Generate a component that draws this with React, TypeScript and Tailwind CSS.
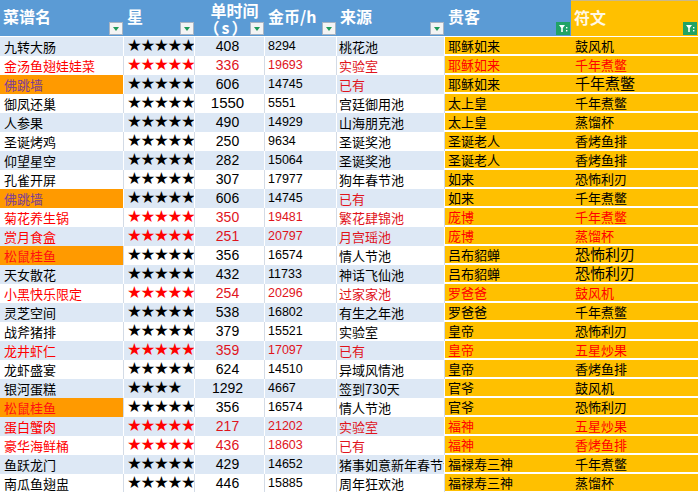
import React from 'react';

type Row = {
  n: string;
  s: number;
  t: string;
  c: string;
  src: string;
  g: string;
  r: string;
  red?: boolean;
  hl?: 'purple' | 'red';
  bigR?: boolean;
  bigT?: boolean;
};

const rows: Row[] = [
  { n: '九转大肠', s: 5, t: '408', c: '8294', src: '桃花池', g: '耶稣如来', r: '鼓风机' },
  { n: '金汤鱼翅娃娃菜', s: 5, t: '336', c: '19693', src: '实验室', g: '耶稣如来', r: '千年煮鳖', red: true },
  { n: '佛跳墙', s: 5, t: '606', c: '14745', src: '已有', g: '耶稣如来', r: '千年煮鳖', hl: 'purple', bigR: true },
  { n: '御凤还巢', s: 5, t: '1550', c: '5551', src: '宫廷御用池', g: '太上皇', r: '千年煮鳖', bigT: true },
  { n: '人参果', s: 5, t: '490', c: '14929', src: '山海朋克池', g: '太上皇', r: '蒸馏杯' },
  { n: '圣诞烤鸡', s: 5, t: '250', c: '9634', src: '圣诞奖池', g: '圣诞老人', r: '香烤鱼排' },
  { n: '仰望星空', s: 5, t: '282', c: '15064', src: '圣诞奖池', g: '圣诞老人', r: '香烤鱼排' },
  { n: '孔雀开屏', s: 5, t: '307', c: '17977', src: '狗年春节池', g: '如来', r: '恐怖利刃' },
  { n: '佛跳墙', s: 5, t: '606', c: '14745', src: '已有', g: '如来', r: '千年煮鳖', hl: 'purple' },
  { n: '菊花养生锅', s: 5, t: '350', c: '19481', src: '繁花肆锦池', g: '庞博', r: '千年煮鳖', red: true },
  { n: '赏月食盒', s: 5, t: '251', c: '20797', src: '月宫瑶池', g: '庞博', r: '蒸馏杯', red: true },
  { n: '松鼠桂鱼', s: 5, t: '356', c: '16574', src: '情人节池', g: '吕布貂蝉', r: '恐怖利刃', hl: 'red', bigR: true },
  { n: '天女散花', s: 5, t: '432', c: '11733', src: '神话飞仙池', g: '吕布貂蝉', r: '恐怖利刃', bigR: true },
  { n: '小黑快乐限定', s: 5, t: '254', c: '20296', src: '过家家池', g: '罗爸爸', r: '鼓风机', red: true },
  { n: '灵芝空间', s: 5, t: '538', c: '16802', src: '有生之年池', g: '罗爸爸', r: '千年煮鳖' },
  { n: '战斧猪排', s: 5, t: '379', c: '15521', src: '实验室', g: '皇帝', r: '恐怖利刃' },
  { n: '龙井虾仁', s: 5, t: '359', c: '17097', src: '已有', g: '皇帝', r: '五星炒果', red: true },
  { n: '龙虾盛宴', s: 5, t: '624', c: '14510', src: '异域风情池', g: '皇帝', r: '香烤鱼排' },
  { n: '银河蛋糕', s: 4, t: '1292', c: '4667', src: '签到730天', g: '官爷', r: '鼓风机' },
  { n: '松鼠桂鱼', s: 5, t: '356', c: '16574', src: '情人节池', g: '官爷', r: '恐怖利刃', hl: 'red' },
  { n: '蛋白蟹肉', s: 5, t: '217', c: '21202', src: '实验室', g: '福神', r: '五星炒果', red: true },
  { n: '豪华海鲜桶', s: 5, t: '436', c: '18603', src: '已有', g: '福神', r: '香烤鱼排', red: true },
  { n: '鱼跃龙门', s: 5, t: '429', c: '14652', src: '猪事如意新年春节池', g: '福禄寿三神', r: '千年煮鳖' },
  { n: '南瓜鱼翅盅', s: 5, t: '446', c: '15885', src: '周年狂欢池', g: '福禄寿三神', r: '蒸馏杯' },
];

const cjk = "font-['Noto_Sans_CJK_SC',sans-serif]";
const num = "font-['Liberation_Sans','Noto_Sans_CJK_SC',sans-serif]";

function Dropdown() {
  return (
    <div className="shrink-0 self-end mb-[1px] mr-[1px] w-[14px] h-[13px] bg-[#f4f4f4] border border-[#a9b4c2] flex items-center justify-center">
      <div className="w-0 h-0 border-l-[3px] border-r-[3px] border-t-[4px] border-l-transparent border-r-transparent border-t-[#1f9a5a]" />
    </div>
  );
}

function FilterOn() {
  return (
    <div className="shrink-0 self-end mb-[1px] mr-[1px] w-[14px] h-[13px] bg-[#21a366] flex items-center justify-center">
      <svg width="10" height="9" viewBox="0 0 10 9">
        <path d="M1 1h6L4.8 4v4H3.2V4z" fill="#fff" />
        <rect x="8" y="3" width="1.4" height="1.4" fill="#fff" />
        <rect x="8" y="6" width="1.4" height="1.4" fill="#fff" />
      </svg>
    </div>
  );
}

function HeadCell({ label, filtered, gold }: { label: string; filtered?: boolean; gold?: boolean }) {
  return (
    <div
      className={`h-[37px] flex border-b border-white font-bold text-[16px] whitespace-nowrap ${cjk} ${
        gold ? 'bg-[#ffc000] border-t border-t-[#c9b88a] text-[#fff8e6]' : 'bg-[#5b9bd5] text-white'
      }`}
    >
      <div className="flex-1 min-w-0 pl-[3px] flex items-center pb-[4px]">{label}</div>
      {filtered ? <FilterOn /> : <Dropdown />}
    </div>
  );
}

function TimeHead() {
  return (
    <div className={`h-[37px] flex flex-col border-b border-white bg-[#5b9bd5] text-white font-bold text-[16px] leading-none whitespace-nowrap ${cjk}`}>
      <div className="h-[19px] flex items-center justify-center pl-[9px] pt-[1px]">单时间</div>
      <div className="flex-1 flex">
        <div className="flex-1 flex items-center justify-center pl-[8px] pb-[1px] tracking-[2px]">（s）</div>
        <Dropdown />
      </div>
    </div>
  );
}

function Header() {
  return (
    <>
      <HeadCell label="菜谱名" />
      <HeadCell label="星" />
      <TimeHead />
      <HeadCell label="金币/h" />
      <HeadCell label="来源" />
      <HeadCell label="贵客" filtered />
      <HeadCell label="符文" filtered gold />
    </>
  );
}

function DataRow({ row, i }: { row: Row; i: number }) {
  const shaded = i % 2 === 0;
  const line = shaded ? 'border-white' : 'border-[#d3dbe6]';
  const base = `h-[19px] flex items-center overflow-hidden whitespace-nowrap border-r ${line}`;
  const cell = `${base} ${shaded ? 'bg-[#dde8f5]' : 'bg-white'}`;
  const txt = row.red ? 'text-[#ff0000]' : 'text-black';
  const numTxt = row.red ? 'text-[#e0141c]' : 'text-black';
  const srcTxt = row.red || row.src === '已有' ? 'text-[#e0141c]' : 'text-black';

  let nameCls = `${cell} ${txt}`;
  if (row.hl === 'purple') nameCls = `${base} bg-[#ff9a00] text-[#7b3c98]`;
  if (row.hl === 'red') nameCls = `${base} bg-[#ff9a00] text-[#ff1010]`;

  return (
    <>
      <div className={`${nameCls} pl-[4px] text-[13px] ${cjk}`}>{row.n}</div>
      <div className={`${cell} ${txt} pl-[3px] text-[16.5px] leading-none tracking-[-1.3px] font-['DejaVu_Sans',sans-serif]`}>
        {'★'.repeat(row.s)}
      </div>
      <div className={`${cell} ${numTxt} justify-center pr-[4px] ${row.bigT ? 'text-[15px]' : 'text-[14px]'} ${num}`}>
        {row.t}
      </div>
      <div className={`${cell} ${numTxt} pl-[3px] text-[12.5px] ${num}`}>{row.c}</div>
      <div className={`${cell} ${srcTxt} pl-[2px] text-[13px] ${cjk}`}>{row.src}</div>
      <div className={`h-[19px] flex items-center border-b-2 border-white bg-[#ffc000] pl-[3px] text-[13px] ${txt} ${cjk}`}>
        {row.g}
      </div>
      <div
        className={`h-[19px] flex items-center border-b-2 border-white bg-[#ffc000] pl-[4px] ${
          row.bigR ? 'text-[15px]' : 'text-[13px]'
        } ${txt} ${cjk}`}
      >
        {row.r}
      </div>
    </>
  );
}

export default function App() {
  return (
    <div className="w-[698px] h-[492px] overflow-hidden bg-white">
      <div className="grid grid-cols-[124px_71px_70px_72px_108px_126px_127px]">
        <Header />
        {rows.map((row, i) => (
          <DataRow key={i} row={row} i={i} />
        ))}
      </div>
    </div>
  );
}
